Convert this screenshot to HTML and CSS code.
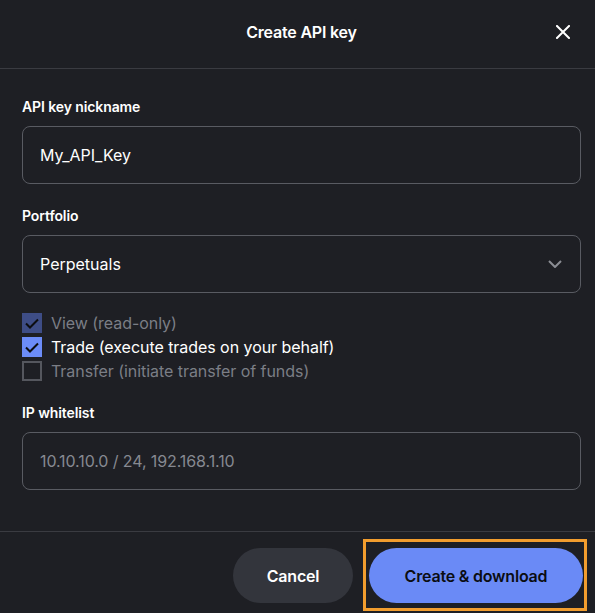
FILE: index.html
```html
<!DOCTYPE html>
<html lang="en">
<head>
<meta charset="utf-8">
<title>Create API key</title>
<link rel="stylesheet" href="styles.css">
</head>
<body>
<div class="dialog">
  <header class="head">
    <h1 class="title">Create API key</h1>
    <button class="close" aria-label="Close">
      <svg width="14" height="14" viewBox="0 0 14 14"><path d="M1 1L13 13M13 1L1 13" stroke="#ffffff" stroke-width="2" stroke-linecap="square"/></svg>
    </button>
  </header>
  <main class="body">
    <label class="label">API key nickname</label>
    <div class="field"><span class="value">My_API_Key</span></div>

    <label class="label gap">Portfolio</label>
    <div class="field select">
      <span class="value">Perpetuals</span>
      <svg class="chev" width="14" height="8" viewBox="0 0 14 8"><path d="M1 1L7 7L13 1" fill="none" stroke="#8b8d94" stroke-width="2"/></svg>
    </div>

    <div class="checks">
      <div class="check disabled">
        <span class="box on dim"><svg width="14" height="11" viewBox="0 0 14 11"><path d="M1 5.5L5 9.5L13 1.5" fill="none" stroke="#0c0d10" stroke-width="2"/></svg></span>
        <span>View (read-only)</span>
      </div>
      <div class="check">
        <span class="box on"><svg width="14" height="11" viewBox="0 0 14 11"><path d="M1 5.5L5 9.5L13 1.5" fill="none" stroke="#0c0d10" stroke-width="2"/></svg></span>
        <span>Trade (execute trades on your behalf)</span>
      </div>
      <div class="check disabled">
        <span class="box off"></span>
        <span>Transfer (initiate transfer of funds)</span>
      </div>
    </div>

    <label class="label gap2">IP whitelist</label>
    <div class="field"><span class="value placeholder">10.10.10.0 / 24, 192.168.1.10</span></div>
  </main>
  <footer class="foot">
    <button class="btn cancel">Cancel</button>
    <div class="hl">
      <button class="btn primary">Create &amp; download</button>
    </div>
  </footer>
</div>
</body>
</html>
```
FILE: styles.css
```css
* { box-sizing: border-box; }
html, body { margin: 0; padding: 0; }
body {
  background: #1e1f24;
  color: #ffffff;
  font-family: Inter, "Noto Sans", "Liberation Sans", sans-serif;
  width: 595px;
  height: 613px;
  overflow: hidden;
}
.dialog { display: flex; flex-direction: column; height: 613px; }
.head {
  height: 69px;
  border-bottom: 1px solid #3a3b41;
  display: flex;
  align-items: center;
  justify-content: center;
  position: relative;
  padding: 0 14px 4px 22px;
}
.title { margin: 0; font-size: 16px; font-weight: 600; letter-spacing: -0.2px; }
.close {
  position: absolute;
  right: 25px;
  top: 25px;
  background: none;
  border: 0;
  padding: 0;
  width: 14px;
  height: 14px;
  display: flex;
}
.body {
  padding: 28px 14px 0 22px;
  display: flex;
  flex-direction: column;
}
.label {
  font-size: 14px;
  font-weight: 600;
  line-height: 20px;
  margin-bottom: 9px;
  letter-spacing: -0.1px;
}
.label.gap { margin-top: 22px; }
.label.gap2 { margin-top: 20px; }
.field {
  height: 58px;
  border: 1px solid #595b62;
  border-radius: 8px;
  display: flex;
  align-items: center;
  padding: 0 17px;
}
.value { font-size: 16px; letter-spacing: 0; }
.placeholder { color: #868991; letter-spacing: -0.1px; }
.select { justify-content: space-between; padding-right: 18px; }
.checks { margin-top: 18px; display: flex; flex-direction: column; }
.check {
  display: flex;
  align-items: center;
  height: 24px;
  gap: 9px;
  font-size: 16px;
  letter-spacing: -0.05px;
}
.check.disabled { color: #7b7e86; }
.box {
  width: 20px;
  height: 20px;
  display: flex;
  align-items: center;
  justify-content: center;
}
.box.on { background: #6c8cf8; }
.box.on.dim { background: #3e4d86; }
.box.off { border: 2px solid #55575e; }
.foot {
  margin-top: auto;
  border-top: 1px solid #3a3b41;
  height: 82px;
  display: flex;
  justify-content: flex-end;
  align-items: flex-start;
  padding: 16px 12px 0 0;
  gap: 16px;
}
.btn {
  height: 55px;
  border: 0;
  border-radius: 28px;
  font-family: inherit;
  font-size: 16px;
  font-weight: 600;
  letter-spacing: -0.2px;
}
.cancel { width: 120px; background: #33353c; color: #ffffff; }
.hl { position: relative; }
.hl::after {
  content: "";
  position: absolute;
  left: -6px;
  right: -4px;
  top: -9px;
  bottom: -8px;
  border: 3px solid #f29d2e;
}
.primary { width: 214px; background: #6a8af6; color: #0b0d12; display: block; }
```
